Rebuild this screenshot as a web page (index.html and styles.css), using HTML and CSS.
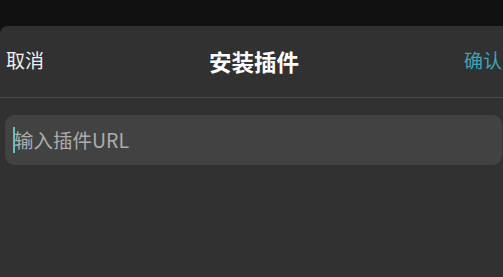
FILE: index.html
```html
<!DOCTYPE html>
<html lang="zh">
<head>
<meta charset="utf-8">
<link rel="stylesheet" href="styles.css">
</head>
<body>
<div class="screen">
  <div class="sheet">
    <div class="header">
      <span class="btn cancel">取消</span>
      <span class="title">安装插件</span>
      <span class="btn confirm">确认</span>
    </div>
    <div class="body">
      <div class="field">
        <span class="caret"></span>
        <span class="placeholder">输入插件URL</span>
      </div>
    </div>
  </div>
</div>
</body>
</html>
```
FILE: styles.css
```css
html, body {
  margin: 0;
  padding: 0;
  width: 503px;
  height: 277px;
  overflow: hidden;
  background: #111111;
  font-family: "Noto Sans CJK SC", "Noto Sans", sans-serif;
}
.screen {
  padding-top: 26px;
  height: 251px;
}
.sheet {
  background: #313131;
  height: 100%;
  border-radius: 8px 8px 0 0;
  width: 520px;
}
.header {
  height: 67px;
  display: flex;
  align-items: center;
  justify-content: space-between;
  border-bottom: 1px solid #484848;
  padding: 0 0 4px 6px;
  position: relative;
}
.btn {
  font-size: 19px;
  line-height: 1;
  color: #f0f0f0;
}
.confirm {
  color: #3fa4b3;
  margin-right: 18px;
}
.title {
  position: absolute;
  left: 209px;
  top: 24px;
  font-size: 22.5px;
  font-weight: bold;
  color: #ffffff;
  line-height: 1;
}
.body {
  padding: 17px 0 0 5px;
}
.field {
  width: 497px;
  height: 50px;
  background: #424242;
  border-radius: 9px;
  display: flex;
  align-items: center;
  padding-left: 8px;
  box-sizing: border-box;
}
.caret {
  width: 2px;
  height: 26px;
  background: #5ec4bd;
  margin-right: -1px;
}
.placeholder {
  font-size: 19.5px;
  color: #adadad;
  line-height: 1;
}
```
